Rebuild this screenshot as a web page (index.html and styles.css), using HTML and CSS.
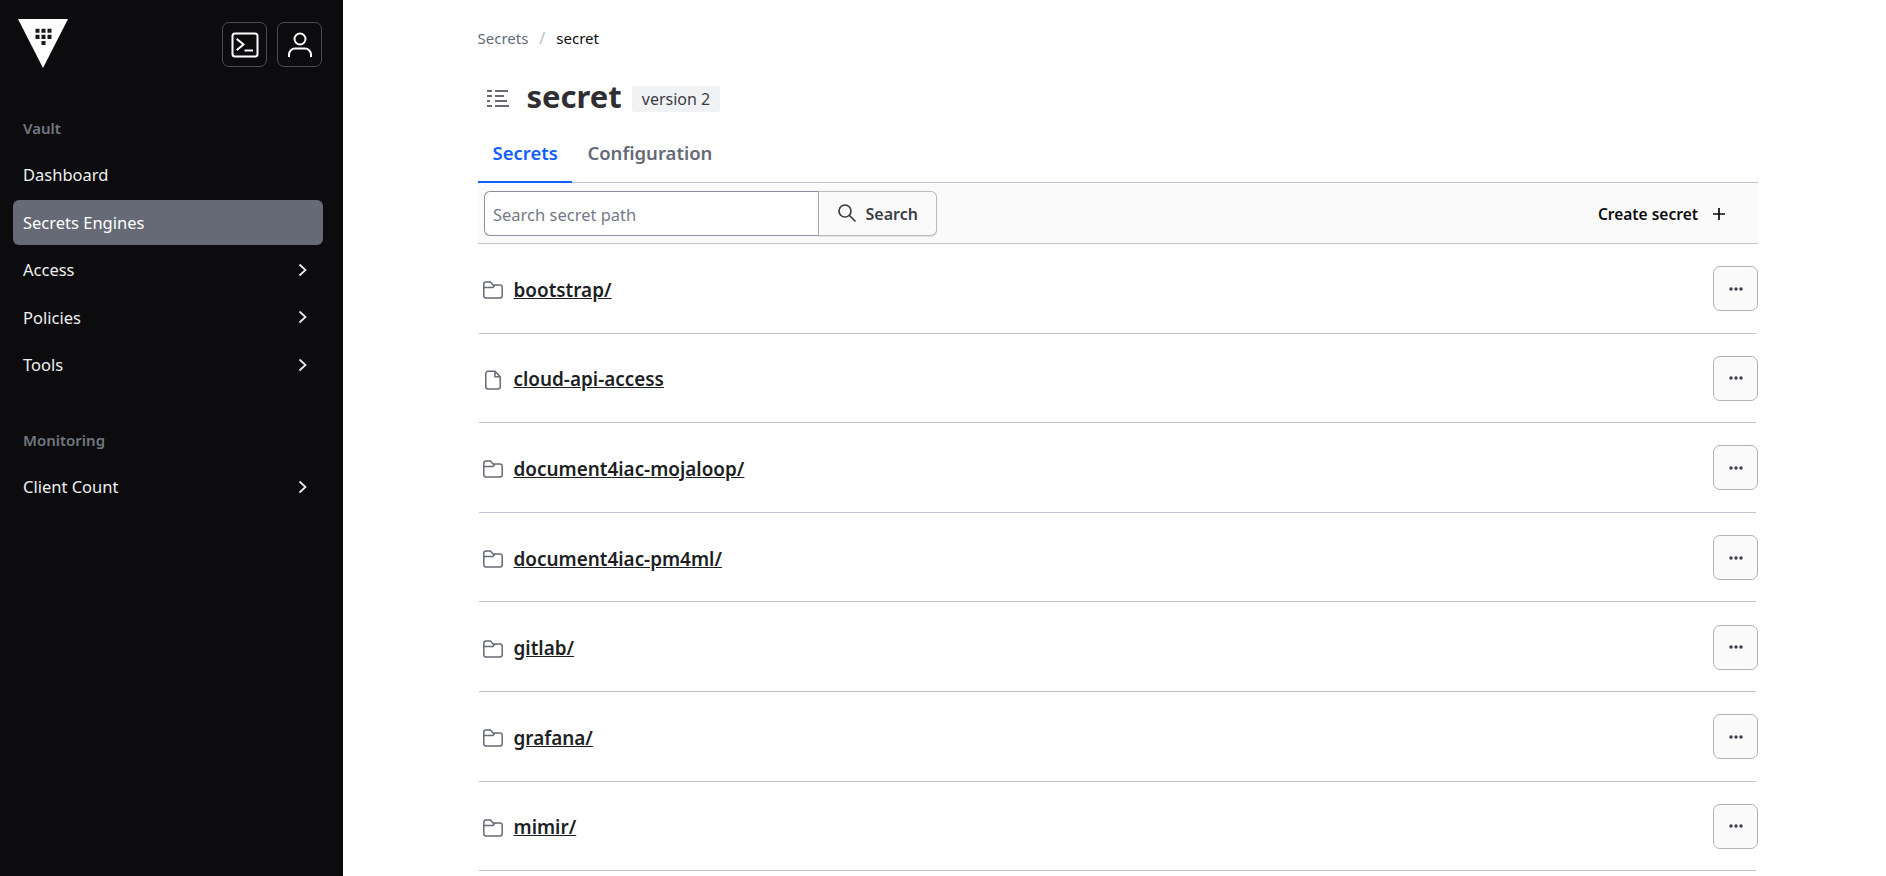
FILE: index.html
```html
<!DOCTYPE html>
<html lang="en">
<head>
<meta charset="utf-8">
<title>secret</title>
<link rel="stylesheet" href="styles.css">
</head>
<body>
<div class="app">
  <aside class="sidebar">
    <div class="side-head">
      <svg class="logo" viewBox="0 0 50 48" preserveAspectRatio="none" aria-label="Vault">
        <path class="logo-tri" d="M0 0H50L25 48Z"/>
        <path class="logo-dots" d="M17.500 9.500h4v4h-4zM23.500 9.500h4v4h-4zM29.500 9.500h4v4h-4zM17.500 15.500h4v4h-4zM23.500 15.500h4v4h-4zM29.500 15.500h4v4h-4zM23.500 21.500h4v4h-4z"/>
      </svg>
      <div class="side-actions">
        <button class="side-btn" aria-label="Console">
          <svg viewBox="0 0 30 30" width="30" height="30"><rect x="2.500" y="3.500" width="25" height="23" rx="2.500"/><path d="M7.500 9.500l6 5-6 5M15.500 20.500h6.500"/></svg>
        </button>
        <button class="side-btn" aria-label="User">
          <svg viewBox="0 0 30 30" width="30" height="30"><circle cx="15" cy="9" r="5.500"/><path d="M4 26v-1.500c0-3.500 3-6 6-6h10c3 0 6 2.500 6 6V26"/></svg>
        </button>
      </div>
    </div>
    <nav class="nav">
      <div class="nav-label">Vault</div>
      <a class="nav-item">Dashboard</a>
      <a class="nav-item active">Secrets Engines</a>
      <a class="nav-item">Access <svg class="chev" viewBox="0 0 16 16"><path d="M5.500 2.500l6 5.500-6 5.500"/></svg></a>
      <a class="nav-item">Policies <svg class="chev" viewBox="0 0 16 16"><path d="M5.500 2.500l6 5.500-6 5.500"/></svg></a>
      <a class="nav-item">Tools <svg class="chev" viewBox="0 0 16 16"><path d="M5.500 2.500l6 5.500-6 5.500"/></svg></a>
      <div class="nav-label second">Monitoring</div>
      <a class="nav-item">Client Count <svg class="chev" viewBox="0 0 16 16"><path d="M5.500 2.500l6 5.500-6 5.500"/></svg></a>
    </nav>
  </aside>
  <main class="main">
    <div class="crumbs"><span class="crumb">Secrets</span><span class="slash">/</span><span class="crumb-current">secret</span></div>
    <div class="title-row">
      <svg class="title-icon" viewBox="0 0 24 20"><path d="M1 2h5M9 2h13M1 7h5M9 7h9M1 12h3M9 12h12M1 17h5M9 17h14"/></svg>
      <h1>secret</h1>
      <span class="badge">version 2</span>
    </div>
    <div class="tabs">
      <a class="tab current">Secrets</a>
      <a class="tab">Configuration</a>
    </div>
    <div class="toolbar">
      <div class="search">
        <div class="search-input">Search secret path</div>
        <button class="search-btn">
          <svg viewBox="0 0 20 20" width="20" height="20"><circle cx="8" cy="8" r="6"/><path d="M12.500 12.500l6 6"/></svg>
          Search
        </button>
      </div>
      <a class="create">Create secret <svg viewBox="0 0 14 14" width="14" height="14"><path d="M7 1v12M1 7h12"/></svg></a>
    </div>
    <div class="rows">
      <div class="row"><svg class="ico" viewBox="0 0 20 20"><path d="M.800 4.500C.800 3 1.800 2 3 2h4.500l2.500 3h7c1.300 0 2.200.900 2.200 2.200v8.600c0 1.300-.900 2.200-2.200 2.200H3c-1.300 0-2.200-.900-2.200-2.200zM.800 7.500H10L12 5"/></svg><a class="name">bootstrap/</a><button class="more" aria-label="More"><svg viewBox="0 0 14 4" width="14" height="4"><circle cx="2" cy="2" r="1.700"/><circle cx="7" cy="2" r="1.700"/><circle cx="12" cy="2" r="1.700"/></svg></button></div>
      <div class="row"><svg class="ico" viewBox="0 0 20 20"><path d="M2.800 3.500C2.800 2.300 3.800 1.300 5 1.300h7l5.200 5.500v10c0 1.200-1 2.200-2.200 2.200H5c-1.200 0-2.200-1-2.200-2.200zM12 1.300v5.500h5.200"/></svg><a class="name">cloud-api-access</a><button class="more" aria-label="More"><svg viewBox="0 0 14 4" width="14" height="4"><circle cx="2" cy="2" r="1.700"/><circle cx="7" cy="2" r="1.700"/><circle cx="12" cy="2" r="1.700"/></svg></button></div>
      <div class="row"><svg class="ico" viewBox="0 0 20 20"><path d="M.800 4.500C.800 3 1.800 2 3 2h4.500l2.500 3h7c1.300 0 2.200.900 2.200 2.200v8.600c0 1.300-.900 2.200-2.200 2.200H3c-1.300 0-2.200-.900-2.200-2.200zM.800 7.500H10L12 5"/></svg><a class="name">document4iac-mojaloop/</a><button class="more" aria-label="More"><svg viewBox="0 0 14 4" width="14" height="4"><circle cx="2" cy="2" r="1.700"/><circle cx="7" cy="2" r="1.700"/><circle cx="12" cy="2" r="1.700"/></svg></button></div>
      <div class="row"><svg class="ico" viewBox="0 0 20 20"><path d="M.800 4.500C.800 3 1.800 2 3 2h4.500l2.500 3h7c1.300 0 2.200.900 2.200 2.200v8.600c0 1.300-.900 2.200-2.200 2.200H3c-1.300 0-2.200-.900-2.200-2.200zM.800 7.500H10L12 5"/></svg><a class="name">document4iac-pm4ml/</a><button class="more" aria-label="More"><svg viewBox="0 0 14 4" width="14" height="4"><circle cx="2" cy="2" r="1.700"/><circle cx="7" cy="2" r="1.700"/><circle cx="12" cy="2" r="1.700"/></svg></button></div>
      <div class="row"><svg class="ico" viewBox="0 0 20 20"><path d="M.800 4.500C.800 3 1.800 2 3 2h4.500l2.500 3h7c1.300 0 2.200.900 2.200 2.200v8.600c0 1.300-.900 2.200-2.200 2.200H3c-1.300 0-2.200-.900-2.200-2.200zM.800 7.500H10L12 5"/></svg><a class="name">gitlab/</a><button class="more" aria-label="More"><svg viewBox="0 0 14 4" width="14" height="4"><circle cx="2" cy="2" r="1.700"/><circle cx="7" cy="2" r="1.700"/><circle cx="12" cy="2" r="1.700"/></svg></button></div>
      <div class="row"><svg class="ico" viewBox="0 0 20 20"><path d="M.800 4.500C.800 3 1.800 2 3 2h4.500l2.500 3h7c1.300 0 2.200.900 2.200 2.200v8.600c0 1.300-.900 2.200-2.200 2.200H3c-1.300 0-2.200-.900-2.200-2.200zM.800 7.500H10L12 5"/></svg><a class="name">grafana/</a><button class="more" aria-label="More"><svg viewBox="0 0 14 4" width="14" height="4"><circle cx="2" cy="2" r="1.700"/><circle cx="7" cy="2" r="1.700"/><circle cx="12" cy="2" r="1.700"/></svg></button></div>
      <div class="row"><svg class="ico" viewBox="0 0 20 20"><path d="M.800 4.500C.800 3 1.800 2 3 2h4.500l2.500 3h7c1.300 0 2.200.900 2.200 2.200v8.600c0 1.300-.900 2.200-2.200 2.200H3c-1.300 0-2.200-.900-2.200-2.200zM.800 7.500H10L12 5"/></svg><a class="name">mimir/</a><button class="more" aria-label="More"><svg viewBox="0 0 14 4" width="14" height="4"><circle cx="2" cy="2" r="1.700"/><circle cx="7" cy="2" r="1.700"/><circle cx="12" cy="2" r="1.700"/></svg></button></div>
    </div>
  </main>
</div>
</body>
</html>
```
FILE: styles.css
```css
* { box-sizing: border-box; }
html, body { margin: 0; height: 100%; overflow: hidden; }
body { font-family: "Noto Sans", "Open Sans", sans-serif; background: #fff; color: #1d1f24; }
button { font-family: inherit; cursor: pointer; }
.app { display: flex; height: 876px; }

.sidebar { width: 343px; flex: none; background: #0c0c0e; color: #efeff1; padding: 19px 20px 0 13px; }
.side-head { display: flex; justify-content: space-between; padding-left: 5px; padding-right: 1px; height: 48px; }
.logo { width: 50px; height: 49px; }
.logo-tri { fill: #fff; }
.logo-dots { fill: #1a1a1c; }
.side-actions { display: flex; gap: 10px; padding-top: 3px; }
.side-btn { width: 45px; height: 45px; padding: 0; display: flex; align-items: center; justify-content: center; background: transparent; border: 1px solid #4a4c54; border-radius: 7px; }
.side-btn svg { fill: none; stroke: #fff; stroke-width: 2; }
.side-btn svg path { stroke-linecap: square; }

.nav { display: flex; flex-direction: column; padding-top: 48px; }
.nav-label { height: 26px; padding-left: 10px; font-size: 15px; line-height: 26px; font-weight: 600; color: #717781; margin-bottom: 11px; }
.nav-label.second { margin-top: 37px; margin-bottom: 11.500px; }
.nav-item { height: 45px; margin-bottom: 2.500px; padding: 0 13px 0 10px; display: flex; align-items: center; justify-content: space-between; font-size: 16.500px; color: #efeff1; border-radius: 6px; }
.nav-item.active { background: #656a76; color: #fff; }
.chev { width: 16px; height: 16px; fill: none; stroke: #efeff1; stroke-width: 1.700; }

.main { flex: 1; padding: 24px 128px 0 134.500px; min-width: 0; }
.crumbs { display: flex; align-items: center; height: 28px; font-size: 15px; }
.crumb { color: #656a76; }
.slash { color: #b8bcc6; margin: 0 11px; font-size: 16px; }
.crumb-current { color: #0c0c0e; }
.title-row { display: flex; align-items: center; height: 50px; margin-top: 19px; padding-left: 8px; }
.title-icon { width: 24px; height: 20px; fill: none; stroke: #656a76; stroke-width: 2; margin-right: 17px; margin-top: 5px; }
h1 { margin: 0 10px 0 0; font-size: 31px; line-height: 40px; font-weight: 700; color: #2f2f33; }
.badge { display: block; padding: 0 10px; height: 26px; line-height: 26px; margin-top: 6px; font-size: 16px; color: #3b3d45; background: #f1f2f3; border-radius: 3px; }

.tabs { display: flex; margin-top: 9px; border-bottom: 1px solid #bfc4d3; height: 53px; }
.tab { padding: 0 14.500px 0 15px; height: 53px; line-height: 46px; font-size: 18.500px; font-weight: 600; color: #656a76; }
.tab.current { color: #1060ff; border-bottom: 2px solid #1060ff; }

.toolbar { height: 61px; display: flex; align-items: center; justify-content: space-between; background: #fafafa; border-bottom: 1px solid #bfc4d3; padding: 0 32px 0 6px; }
.search { display: flex; height: 45px; }
.search-input { width: 335px; background: #fff; border: 1px solid #8c909c; border-right: 1px solid #a8abb5; border-radius: 6px 0 0 6px; padding: 1px 8.500px 0; font-size: 16.500px; line-height: 43px; color: #757a86; }
.search-btn { display: flex; align-items: center; gap: 9px; width: 119px; padding: 1px 0 0 18px; margin-left: -1px; background: #fafafa; border: 1px solid #b8bac2; border-left-color: #a8abb5; border-radius: 0 6px 6px 0; box-shadow: 0 1px 1px rgba(0,0,0,.1); font-size: 16px; font-weight: 600; color: #3b3d45; }
.search-btn svg { fill: none; stroke: #3b3d45; stroke-width: 1.700; margin-top: -2px; }
.create { display: flex; align-items: center; gap: 14px; padding-top: 2px; font-size: 15.500px; font-weight: 600; color: #0c0c0e; }
.create svg { fill: none; stroke: #0c0c0e; stroke-width: 1.700; }

.row { height: 89.600px; display: flex; align-items: center; justify-content: space-between; border-bottom: 1px solid #bfc4d3; padding: 1px 0 0 4px; margin: 0 2px 0 1px; }
.ico { width: 20px; height: 20px; flex: none; fill: none; stroke: #656a76; stroke-width: 1.500; margin-right: 11px; margin-top: 3px; }
.name { flex: 1; font-size: 18.900px; font-weight: 600; color: #1d1f24; text-decoration: underline; margin-top: 2px; }
.more { width: 45px; height: 45px; margin-right: -2px; padding: 0; display: flex; align-items: center; justify-content: center; background: #fafafa; border: 1px solid #b0b2ba; border-radius: 7px; }
.more svg { fill: #3b3d45; }
```
